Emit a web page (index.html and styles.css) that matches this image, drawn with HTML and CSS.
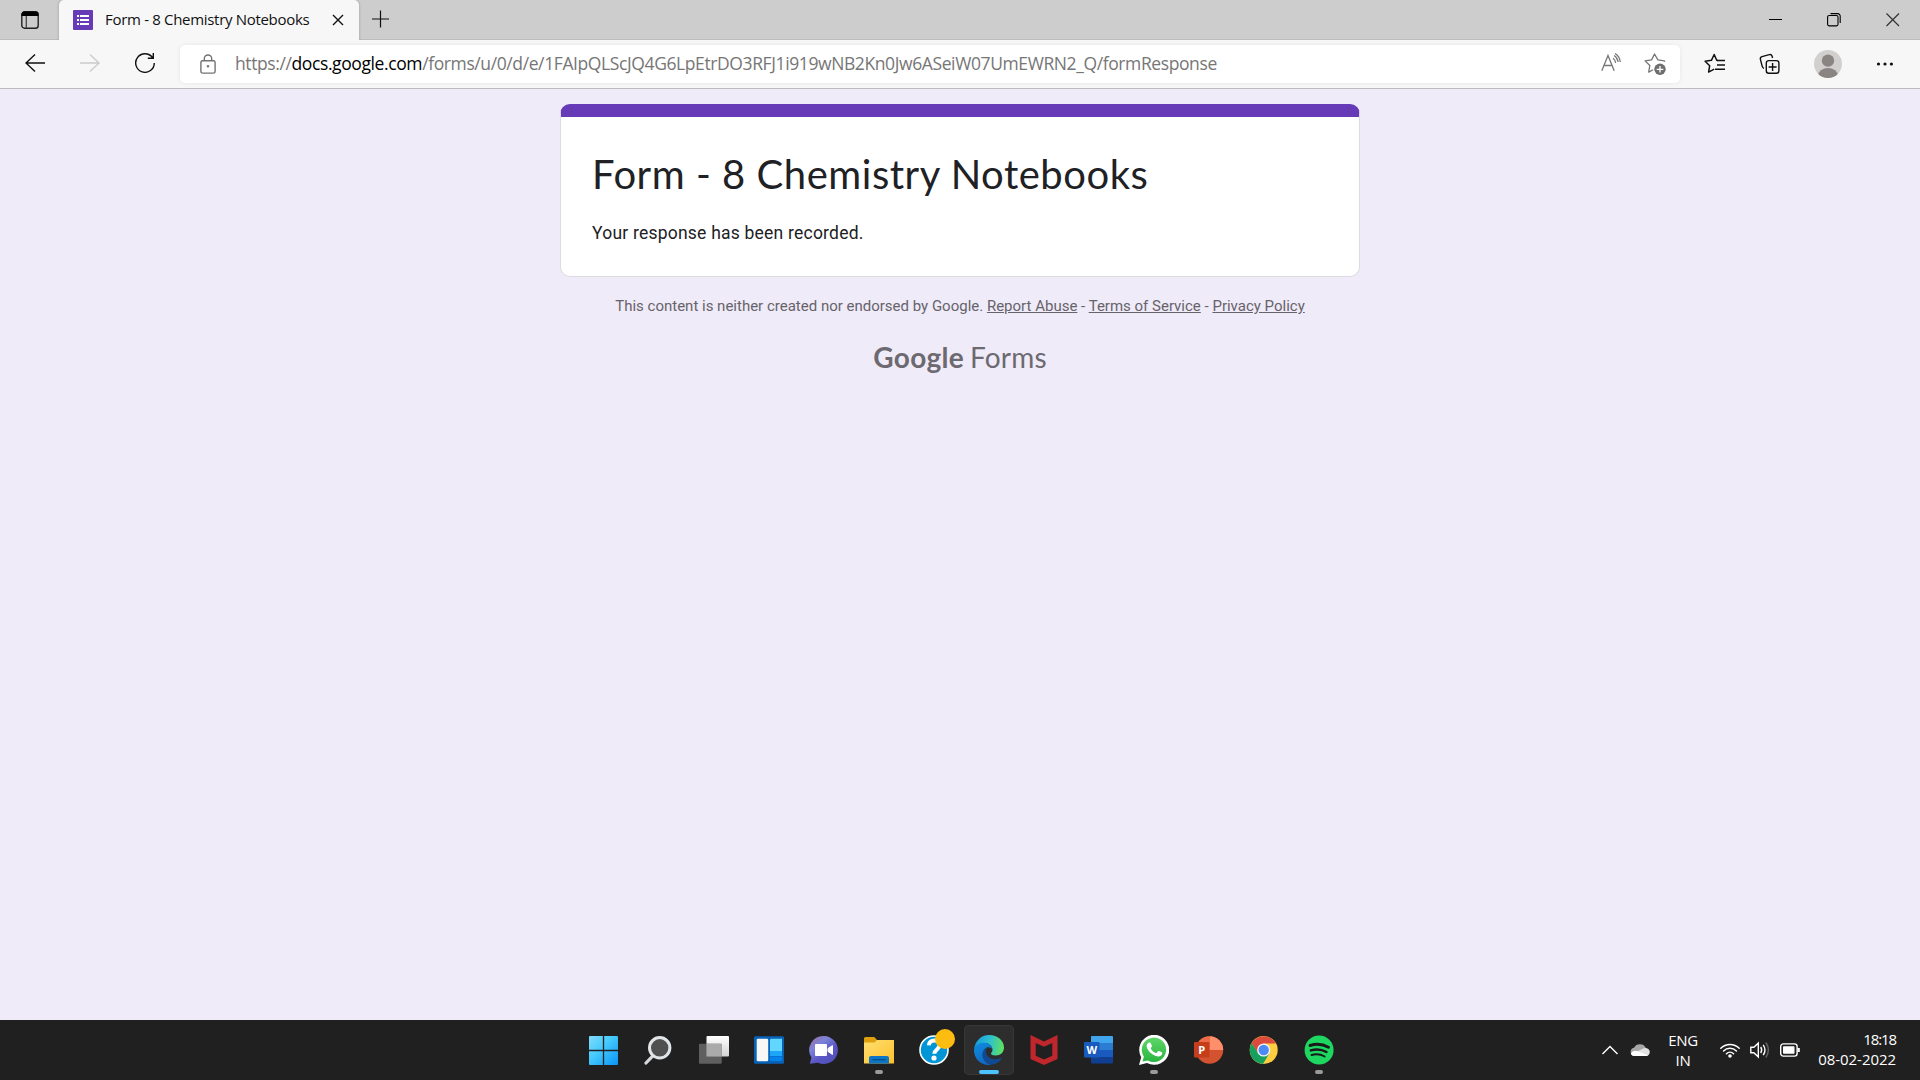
FILE: index.html
```html
<!DOCTYPE html>
<html lang="en">
<head>
<meta charset="utf-8">
<title>Form - 8 Chemistry Notebooks</title>
<link rel="stylesheet" href="styles.css">
</head>
<body>
<header class="tabstrip">
  <div class="tab-actions"><svg width="20" height="20" viewBox="0 0 20 20"><rect x="1.8" y="1.8" width="16.4" height="16.4" rx="2.8" fill="none" stroke="#222" stroke-width="1.4"/><path d="M1.5 6V4.500a3 3 0 0 1 3-3h11a3 3 0 0 1 3 3V6z" fill="#000"/><path d="M6.300 6v12" stroke="#444" stroke-width="1.300"/></svg></div>
  <div class="tab">
    <svg class="favicon" width="20" height="20" viewBox="0 0 20 20"><rect width="20" height="20" rx="1" fill="#673ab7"/><path d="M4 6h2M4 10h2M4 14h2M7 6h9M7 10h9M7 14h9" stroke="#fff" stroke-width="2.200"/></svg>
    <span class="tab-title">Form - 8 Chemistry Notebooks</span>
    <svg class="tab-close" width="12" height="12" viewBox="0 0 12 12"><path d="M1 1l10 10M11 1L1 11" stroke="#111" stroke-width="1.400"/></svg>
  </div>
  <div class="new-tab"><svg width="18" height="18" viewBox="0 0 18 18"><path d="M8.500 .5v17M0 9h17" stroke="#111" stroke-width="1.200"/></svg></div>
  <div class="window-controls">
    <svg width="14" height="14" viewBox="0 0 14 14"><path d="M0 6.500h13" stroke="#000"/></svg>
    <svg width="14" height="14" viewBox="0 0 14 14"><rect x=".6" y="2.500" width="10.400" height="10.400" rx="1.600" fill="none" stroke="#000" stroke-width="1.100"/><path d="M3.500.6h7.200a2.500 2.500 0 0 1 2.500 2.500V10" fill="none" stroke="#000" stroke-width="1.100"/></svg>
    <svg width="14" height="14" viewBox="0 0 14 14"><path d="M.5.5l12.500 12.500M13 .5L.5 13" stroke="#333" stroke-width="1.200"/></svg>
  </div>
</header>
<nav class="toolbar">
  <div class="nav-buttons">
    <svg width="20" height="20" viewBox="0 0 20 20"><path d="M20 10H1M10 1.500L1 10l9 8.500" fill="none" stroke="#111" stroke-width="1.400"/></svg>
    <svg width="20" height="20" viewBox="0 0 20 20"><path d="M0 10h19M10 1.500l9 8.500-9 8.500" fill="none" stroke="#ccc" stroke-width="1.400"/></svg>
    <svg width="20" height="20" viewBox="1 1 20 20"><path d="M18.500 5.500A9.300 9.300 0 1 0 20.300 11M19.300 1v5.300h-5.500" fill="none" stroke="#111" stroke-width="1.400"/></svg>
  </div>
  <div class="address">
    <svg width="16" height="20" viewBox="0 0 16 20"><rect x=".9" y="6.700" width="14.200" height="12.400" rx="1.700" fill="none" stroke="#737373" stroke-width="1.400"/><path d="M4.300 6.500V4.700a3.700 3.700 0 0 1 7.400 0v1.800" fill="none" stroke="#737373" stroke-width="1.400"/><circle cx="8" cy="12.300" r="1.200" fill="#737373"/></svg>
    <span class="url">https://<b>docs.google.com</b>/forms/u/0/d/e/1FAIpQLScJQ4G6LpEtrDO3RFJ1i919wNB2Kn0Jw6ASeiW07UmEWRN2_Q/formResponse</span>
    <svg class="read" width="20" height="20" viewBox="0 0 20 20"><path d="M.8 17.800L7 2.500l6.200 15.300M3 12.500h8" fill="none" stroke="#767676" stroke-width="1.300"/><path d="M12 5.200q2.300 1.500 2.600 4.800M13.200 2.400q3.200 2 4 6.600M14 .5q4.500 2.500 5.300 8.500" fill="none" stroke="#767676" stroke-width="1.200"/></svg>
    <svg class="fav" width="22" height="22" viewBox="0 0 22 22"><path d="M20.800 8.800l-.5-1-6.400-.9L10.500 1 7.600 6.900l-6.500 1 4.700 4.600-1.100 6.600 4.400-2.400" fill="none" stroke="#767676" stroke-width="1.300" stroke-linejoin="round"/><circle cx="16" cy="16.300" r="5.700" fill="#6e6e6e"/><path d="M16 13v6.600M12.700 16.300h6.600" stroke="#fff" stroke-width="1.300"/></svg>
  </div>
  <div class="tools">
    <svg width="22" height="22" viewBox="0 0 22 22"><path d="M14 7.500l-1.300-.3L10.200 1.500 7.400 7.300l-6.300.9 4.600 4.500-1.100 6.400 5.600-3" fill="none" stroke="#111" stroke-width="1.500" stroke-linejoin="round"/><path d="M13 7.500h8M13 12h8M11 16.300h10" stroke="#111" stroke-width="1.500"/></svg>
    <svg width="22" height="22" viewBox="0 0 22 22"><rect x="7.300" y="7.600" width="12.600" height="12.600" rx="2.500" fill="none" stroke="#111" stroke-width="1.400"/><path d="M13.600 10v8M9.600 14h8M5 15.400c-1-.3-1.500-.9-1.800-2L1.400 6.300c-.3-1.300.3-2.300 1.600-2.700l7.300-2c1.400-.4 2.300.1 2.700 1.400l.6 2" fill="none" stroke="#111" stroke-width="1.400"/></svg>
    <svg width="28" height="28" viewBox="0 0 28 28"><clipPath id="avatar"><circle cx="14" cy="14" r="14"/></clipPath><g clip-path="url(#avatar)"><rect width="28" height="28" fill="#d2d0ce"/><circle cx="14" cy="10.600" r="6.200" fill="#8a8583"/><ellipse cx="14" cy="26" rx="10" ry="8" fill="#8a8583"/></g></svg>
    <svg width="18" height="18" viewBox="0 0 18 18"><g fill="#111"><circle cx="3.500" cy="9" r="1.600"/><circle cx="10" cy="9" r="1.600"/><circle cx="16.400" cy="9" r="1.600"/></g></svg>
  </div>
</nav>
<main class="page">
  <section class="card">
    <h1>Form - 8 Chemistry Notebooks</h1>
    <p>Your response has been recorded.</p>
  </section>
  <p class="disclaimer">This content is neither created nor endorsed by Google. <a>Report Abuse</a> - <a>Terms of Service</a> - <a>Privacy Policy</a></p>
  <div class="brand"><span class="google">Google</span><span class="forms">Forms</span></div>
</main>
<footer class="taskbar">
  <div class="apps">
    <div class="app"><svg width="30" height="30" viewBox="0 0 30 30"><defs><linearGradient id="win" x1="0" y1="0" x2="1" y2="1"><stop offset="0" stop-color="#83dcfb"/><stop offset=".45" stop-color="#42c8fc"/><stop offset="1" stop-color="#0a94f6"/></linearGradient></defs><rect y="1" width="29" height="29" rx="1" fill="url(#win)"/><path d="M0 15.500h30M14.500 0v30" stroke="#202020" stroke-width="1.300"/></svg></div>
    <div class="app"><svg width="30" height="30" viewBox="0 0 30 30"><path d="M9.300 20.300L2 28" stroke="#d5d9dc" stroke-width="3.200" stroke-linecap="round"/><circle cx="15.700" cy="12.800" r="10.200" fill="#505050" stroke="#e2e5e8" stroke-width="3"/></svg></div>
    <div class="app"><svg width="30" height="30" viewBox="0 0 30 30"><defs><linearGradient id="tv" x1="0" y1="0" x2="0" y2="1"><stop offset="0" stop-color="#fff"/><stop offset="1" stop-color="#d4d4d4"/></linearGradient></defs><rect x="7.500" y="1" width="22.500" height="20.500" rx="1" fill="url(#tv)"/><rect y="8.700" width="22.700" height="20" rx="1" fill="#666" fill-opacity=".9"/><rect x="7.500" y="8.700" width="15.200" height="12.800" fill="#aaa"/></svg></div>
    <div class="app"><svg width="30" height="30" viewBox="0 0 30 30"><rect y="1.300" width="30" height="27.500" rx="1.500" fill="#0863b8"/><rect x="2.700" y="3.700" width="11.500" height="22.500" rx="1.300" fill="#f7f7f7"/><path d="M16 5q0-1.300 1.300-1.300H28V16H16z" fill="#63d6ff"/><path d="M16 16h12v5H16z" fill="#1da6f7"/><path d="M16 21.500h12v3.200q0 1.300-1.300 1.300H16z" fill="#0683ea"/></svg></div>
    <div class="app"><svg width="30" height="30" viewBox="0 0 30 30"><defs><linearGradient id="chat" x1="0" y1="0" x2=".8" y2="1"><stop offset="0" stop-color="#a26aa0"/><stop offset=".35" stop-color="#7b83d8"/><stop offset=".65" stop-color="#5a57c6"/><stop offset="1" stop-color="#5050b8"/></linearGradient></defs><path d="M15 1a14 14 0 1 1-6 26.700L.8 28.800l1.700-6.200A14 14 0 0 1 15 1z" fill="url(#chat)"/><rect x="6" y="9" width="12" height="12" rx="1" fill="#fff"/><path d="M19 13.500l4.500-3v9L19 16.500z" fill="#fff" stroke="#fff"/></svg></div>
    <div class="app running"><svg width="30" height="30" viewBox="0 0 30 30"><defs><linearGradient id="fold" x1="0" y1="0" x2="1" y2="1"><stop stop-color="#ffdf72"/><stop offset="1" stop-color="#ffc12b"/></linearGradient></defs><path d="M0 3.500Q0 2 1.500 2h8.800l2.700 3H29q1 0 1 1v6H0z" fill="#dfa00d"/><path d="M0 7.500h10.500L13 5h17v23.500H0z" fill="url(#fold)"/><path d="M5 28.500V23q0-2 2-2h16q2 0 2 2v5.500z" fill="#0d75c5"/><path d="M8.500 24.700h13" stroke="#064d8b" stroke-width="1.300"/></svg></div>
    <div class="app"><svg width="30" height="30" viewBox="0 0 30 30"><circle cx="15" cy="15" r="14" fill="#0095d5" stroke="#fff" stroke-width="1.600"/><path d="M9.800 10.300C10 7 12.500 5.500 15.300 5.500c3 0 5.300 1.700 5.300 4.600 0 4.500-5.300 4.200-5.300 8.700" fill="none" stroke="#fff" stroke-width="4"/><circle cx="15" cy="23" r="2.600" fill="#fff"/></svg><i class="badge"></i></div>
    <div class="app active"><svg width="30" height="30" viewBox="0 0 30 30"><defs><linearGradient id="e1" x1="0" y1=".4" x2="1" y2=".5"><stop stop-color="#159be0"/><stop offset=".5" stop-color="#2ebfd0"/><stop offset="1" stop-color="#60e35c"/></linearGradient><linearGradient id="e2" x1="0" y1="0" x2=".5" y2="1"><stop stop-color="#0d8ee0"/><stop offset="1" stop-color="#1268c1"/></linearGradient></defs><path d="M0 15C1 6 7 0 15 0c9 0 15 6 15 12.500 0 5-3.700 8-8.500 8-3 0-4.500-1-4.500-2 0-.8 1.500-1.500 1.500-3.700C18.500 11 15 8 10.500 8 5 8 1.200 11 0 15z" fill="url(#e1)"/><path d="M0 15C1 10 5 7.700 10 7.700c4.500 0 8 2.800 8.500 6.500-1.500-1.800-4-2.500-6-1.500C7 16 7.500 25 17 29.800 7 31 0 24 0 15z" fill="url(#e2)"/><path d="M13 12.600c-6.500 3.200-6.500 11.900 2 17 5.500.8 10-2 12.700-6 .4-.7-.1-1-.8-.7C20.500 26 12.500 23.500 12 17c-.1-1.800.3-3.200 1-4.400z" fill="#114a91"/></svg></div>
    <div class="app"><svg width="30" height="30" viewBox="0 0 30 30"><path d="M1.500 0l13.500 6.500L28.500 0v24L15 30 1.500 24z" fill="#c0272d"/><path d="M6.700 8l8.300 3.700L23.300 8v12.700L15 24.500l-8.300-3.800z" fill="#202020"/></svg></div>
    <div class="app"><svg width="30" height="30" viewBox="0 0 30 30"><path d="M7 2q0-1 1-1h20q1 0 1 1v6H7z" fill="#41a5ee"/><path d="M7 8h22v7H7z" fill="#2b7cd3"/><path d="M7 15h22v7H7z" fill="#185abd"/><path d="M7 22h22v5.500q0 1-1 1H8q-1 0-1-1z" fill="#103f91"/><rect y="7" width="15.500" height="15.500" rx="1" fill="#185abd"/><text x="7.700" y="18.800" class="glyph">W</text></svg></div>
    <div class="app running"><svg width="30" height="30" viewBox="0 0 30 30"><defs><linearGradient id="wa" x1="0" y1="0" x2="0" y2="1"><stop stop-color="#5fd669"/><stop offset="1" stop-color="#29b540"/></linearGradient></defs><path d="M0 30l2.200-7.700A15 15 0 1 1 8 28z" fill="#fff"/><path d="M3.500 26.500l1.400-4.800a12.200 12.200 0 1 1 4 3.700z" fill="url(#wa)"/><path d="M10.400 7.500c.9-.2 1.200.1 1.500.9l1 2.400c.2.600-.1 1-.9 2-.3.400-.3.600 0 1.100 1.200 2 2.700 3.200 4.700 4.100.5.200.8.100 1.100-.3l1.100-1.400c.4-.5.700-.5 1.200-.3l2.600 1.300c.6.300.7.500.6 1-.3 2.300-2.300 3.300-4.300 3.100-5.300-.5-10.200-5.200-11.300-9.700-.4-2 .9-4 2.700-4.200z" fill="#fff"/></svg></div>
    <div class="app"><svg width="30" height="30" viewBox="0 0 30 30"><circle cx="15.500" cy="15" r="13.700" fill="#d35230"/><path d="M15.500 15V1.300A13.700 13.700 0 0 1 29.200 15z" fill="#ff8f6b"/><path d="M15.500 1.300A13.700 13.700 0 0 0 1.800 15h13.700z" fill="#ed6c47"/><rect y="7" width="15.500" height="15.500" rx="1" fill="#c43e1c"/><text x="7.700" y="18.800" class="glyph">P</text></svg></div>
    <div class="app"><svg width="30" height="30" viewBox="0 0 30 30"><circle cx="14.700" cy="15" r="14" fill="#ffcd40"/><path d="M2.600 8A14 14 0 0 1 26.800 8.500H14.700l-5.600 10z" fill="#dc4a3e"/><path d="M2.600 8A14 14 0 0 0 14 29l6.300-10.500h-11z" fill="#16a05d"/><circle cx="14.700" cy="15" r="6.600" fill="#f2f2f2"/><circle cx="14.700" cy="15" r="5.200" fill="#4c8bf5"/></svg></div>
    <div class="app running"><svg width="30" height="30" viewBox="0 0 30 30"><circle cx="15.100" cy="15" r="14.500" fill="#1ed760"/><path d="M6 10.500c6.500-2 13-1.300 18.500 1.700" stroke="#191919" stroke-width="2.900" stroke-linecap="round" fill="none"/><path d="M6.800 15.400c5.600-1.600 11-1 15.700 1.600" stroke="#191919" stroke-width="2.400" stroke-linecap="round" fill="none"/><path d="M7.500 20c4.700-1.300 9.300-.8 13.200 1.500" stroke="#191919" stroke-width="1.900" stroke-linecap="round" fill="none"/></svg></div>
  </div>
  <div class="tray">
    <svg class="chev" width="18" height="12" viewBox="0 0 18 12"><path d="M1.500 10L9 2.500l7.500 7.500" fill="none" stroke="#fff" stroke-width="1.400"/></svg>
    <svg class="cloud" width="20" height="14" viewBox="0 0 20 14"><path d="M4.500 13A4.200 4.200 0 0 1 4 4.700 6.800 6.800 0 0 1 16 5.200a4 4 0 0 1 0 7.800z" fill="#a6a6a6"/><path d="M1 11L14.500 5q5 0 5.300 4-.3 4-4 4h-11Q2 13 1 11z" fill="#e2e2e2"/><path d="M.8 10.800Q2.500 7 7 8l11 4.300q-1 .7-2.500.7h-11Q2 13 .8 10.800z" fill="#fff"/></svg>
    <div class="lang"><span>ENG</span><span>IN</span></div>
    <svg class="wifi" width="20" height="16" viewBox="0 0 20 16"><g fill="none" stroke="#fff" stroke-width="1.500" stroke-linecap="round"><path d="M.8 6.200a13 13 0 0 1 18.400 0M3.600 9a9 9 0 0 1 12.800 0M6.500 11.700a5 5 0 0 1 7 0"/></g><circle cx="10" cy="14" r="1.800" fill="#fff"/></svg>
    <svg class="vol" width="20" height="18" viewBox="0 0 20 18"><g fill="none" stroke="#fff" stroke-width="1.400"><path d="M.8 6.300h3l4.500-4.100v13.600l-4.500-4.100h-3zM10.700 6q2 3 0 6M13.200 3.800q3.600 5.200 0 10.400"/><path d="M15.800 1.500q5.200 7.500 0 15" stroke="#666"/></g></svg>
    <svg class="bat" width="20" height="14" viewBox="0 0 20 14"><rect x=".7" y=".9" width="16.400" height="12.200" rx="2.600" fill="none" stroke="#fff" stroke-width="1.400"/><rect x="3" y="3.200" width="11.500" height="7.600" rx=".8" fill="#fff"/><path d="M18.700 5v4" stroke="#fff" stroke-width="2.200"/></svg>
    <div class="clock"><span class="time">18:18</span><span>08-02-2022</span></div>
  </div>
</footer>
</body>
</html>
```
FILE: styles.css
```css
* { box-sizing: border-box; }
body { margin: 0; height: 1080px; display: flex; flex-direction: column; overflow: hidden; font-family: "Open Sans", "Noto Sans", sans-serif; }
svg { display: block; flex: none; }
h1, p { margin: 0; font-weight: 400; }
span { white-space: nowrap; }

.tabstrip { height: 40px; flex: none; display: flex; background: #cdcdcd; box-shadow: inset 0 -1px #bcbcbc; }
.tab-actions { width: 59px; padding: 10px 0 0 20px; }
.tab { width: 300px; height: 40px; padding: 0 15px 0 14px; display: flex; align-items: center; background: #f7f7f7; border-radius: 5px 5px 0 0; box-shadow: 0 0 3px rgba(0,0,0,.25); clip-path: inset(0 -4px 0 -4px); }
.tab-title { margin-left: 12px; padding-bottom: 2px; flex: 1; font-size: 15px; letter-spacing: -.31px; color: #111; }
.new-tab { padding: 10px 0 0 13px; }
.window-controls { margin-left: auto; padding: 13px 21px 0 0; display: flex; gap: 44px; }
.window-controls svg:nth-child(2) { margin-right: 1px; }
.window-controls svg:nth-child(3) { margin-right: -1px; }

.toolbar { height: 49px; flex: none; display: flex; background: #f7f7f7; border-bottom: 1px solid #bcbcbc; }
.nav-buttons { width: 180px; padding: 0 0 2px 25px; display: flex; align-items: center; gap: 35px; }
.address { width: 1500px; height: 38px; margin-top: 5px; padding: 0 14px 0 20px; display: flex; align-items: center; background: #fff; border-radius: 5px; box-shadow: 0 0 4px rgba(0,0,0,.08); }
.url { flex: 1; margin-left: 19px; padding-bottom: 2px; font-size: 17.500px; letter-spacing: -.395px; color: #767676; }
.url b { font-weight: 400; color: #000; }
.read { margin-bottom: 2px; }
.fav { margin-left: 23px; }
.tools { display: flex; align-items: center; padding-left: 24px; gap: 33px; }

.page { flex: 1; background: #f0ebf8; padding-top: 15px; display: flex; flex-direction: column; align-items: center; }
.card { width: 800px; height: 173px; padding: 32px 31px 0; background: linear-gradient(#673ab7 0 13px, #fff 13px) border-box; border: 1px solid #dadce0; border-top: 13px solid #673ab7; border-radius: 10px; color: #202124; }
.card h1 { font: 400 40px/50px Lato, sans-serif; letter-spacing: .53px; }
.card p { margin-top: 22px; font: 400 17.500px/25px Roboto, sans-serif; letter-spacing: .22px; }
.disclaimer { margin-top: 18px; font: 400 15px/22px Roboto, sans-serif; color: #66636b; }
.disclaimer a { text-decoration: underline; }
.brand { margin-top: 22px; display: flex; gap: 6px; font: 400 28px/36px Lato, sans-serif; letter-spacing: .15px; color: #6c6971; }
.google { font-weight: 700; letter-spacing: .3px; }

.taskbar { height: 60px; flex: none; display: flex; background: #202020; color: #fff; }
.apps { padding: 5px 0 0 579px; display: flex; gap: 5px; }
.app { position: relative; width: 50px; height: 50px; padding: 10px; border-radius: 5px; }
.active { background: #2d2d2d; box-shadow: inset 0 0 0 1px #373737; }
.running::after, .active::after { content: ""; position: absolute; left: 21px; bottom: 1px; width: 8px; height: 4px; border-radius: 2px; background: #9a9a9a; }
.active::after { left: 15px; width: 20px; background: #4cc2ff; }
.badge { position: absolute; left: 26px; top: 4px; width: 20px; height: 20px; border-radius: 50%; background: #fdbc10; }
.glyph { font: 700 11px "Open Sans", sans-serif; fill: #fff; text-anchor: middle; }
.tray { margin-left: auto; padding-right: 24px; display: flex; align-items: center; font-size: 15px; line-height: 20px; }
.cloud { margin-left: 11px; }
.lang { width: 36px; margin-left: 15px; display: flex; flex-direction: column; align-items: center; letter-spacing: -.3px; }
.wifi { margin-left: 19px; }
.vol, .bat { margin-left: 10px; }
.clock { width: 96px; padding-bottom: 2px; display: flex; flex-direction: column; align-items: flex-end; letter-spacing: -.05px; }
.time { letter-spacing: -1.100px; }
```
